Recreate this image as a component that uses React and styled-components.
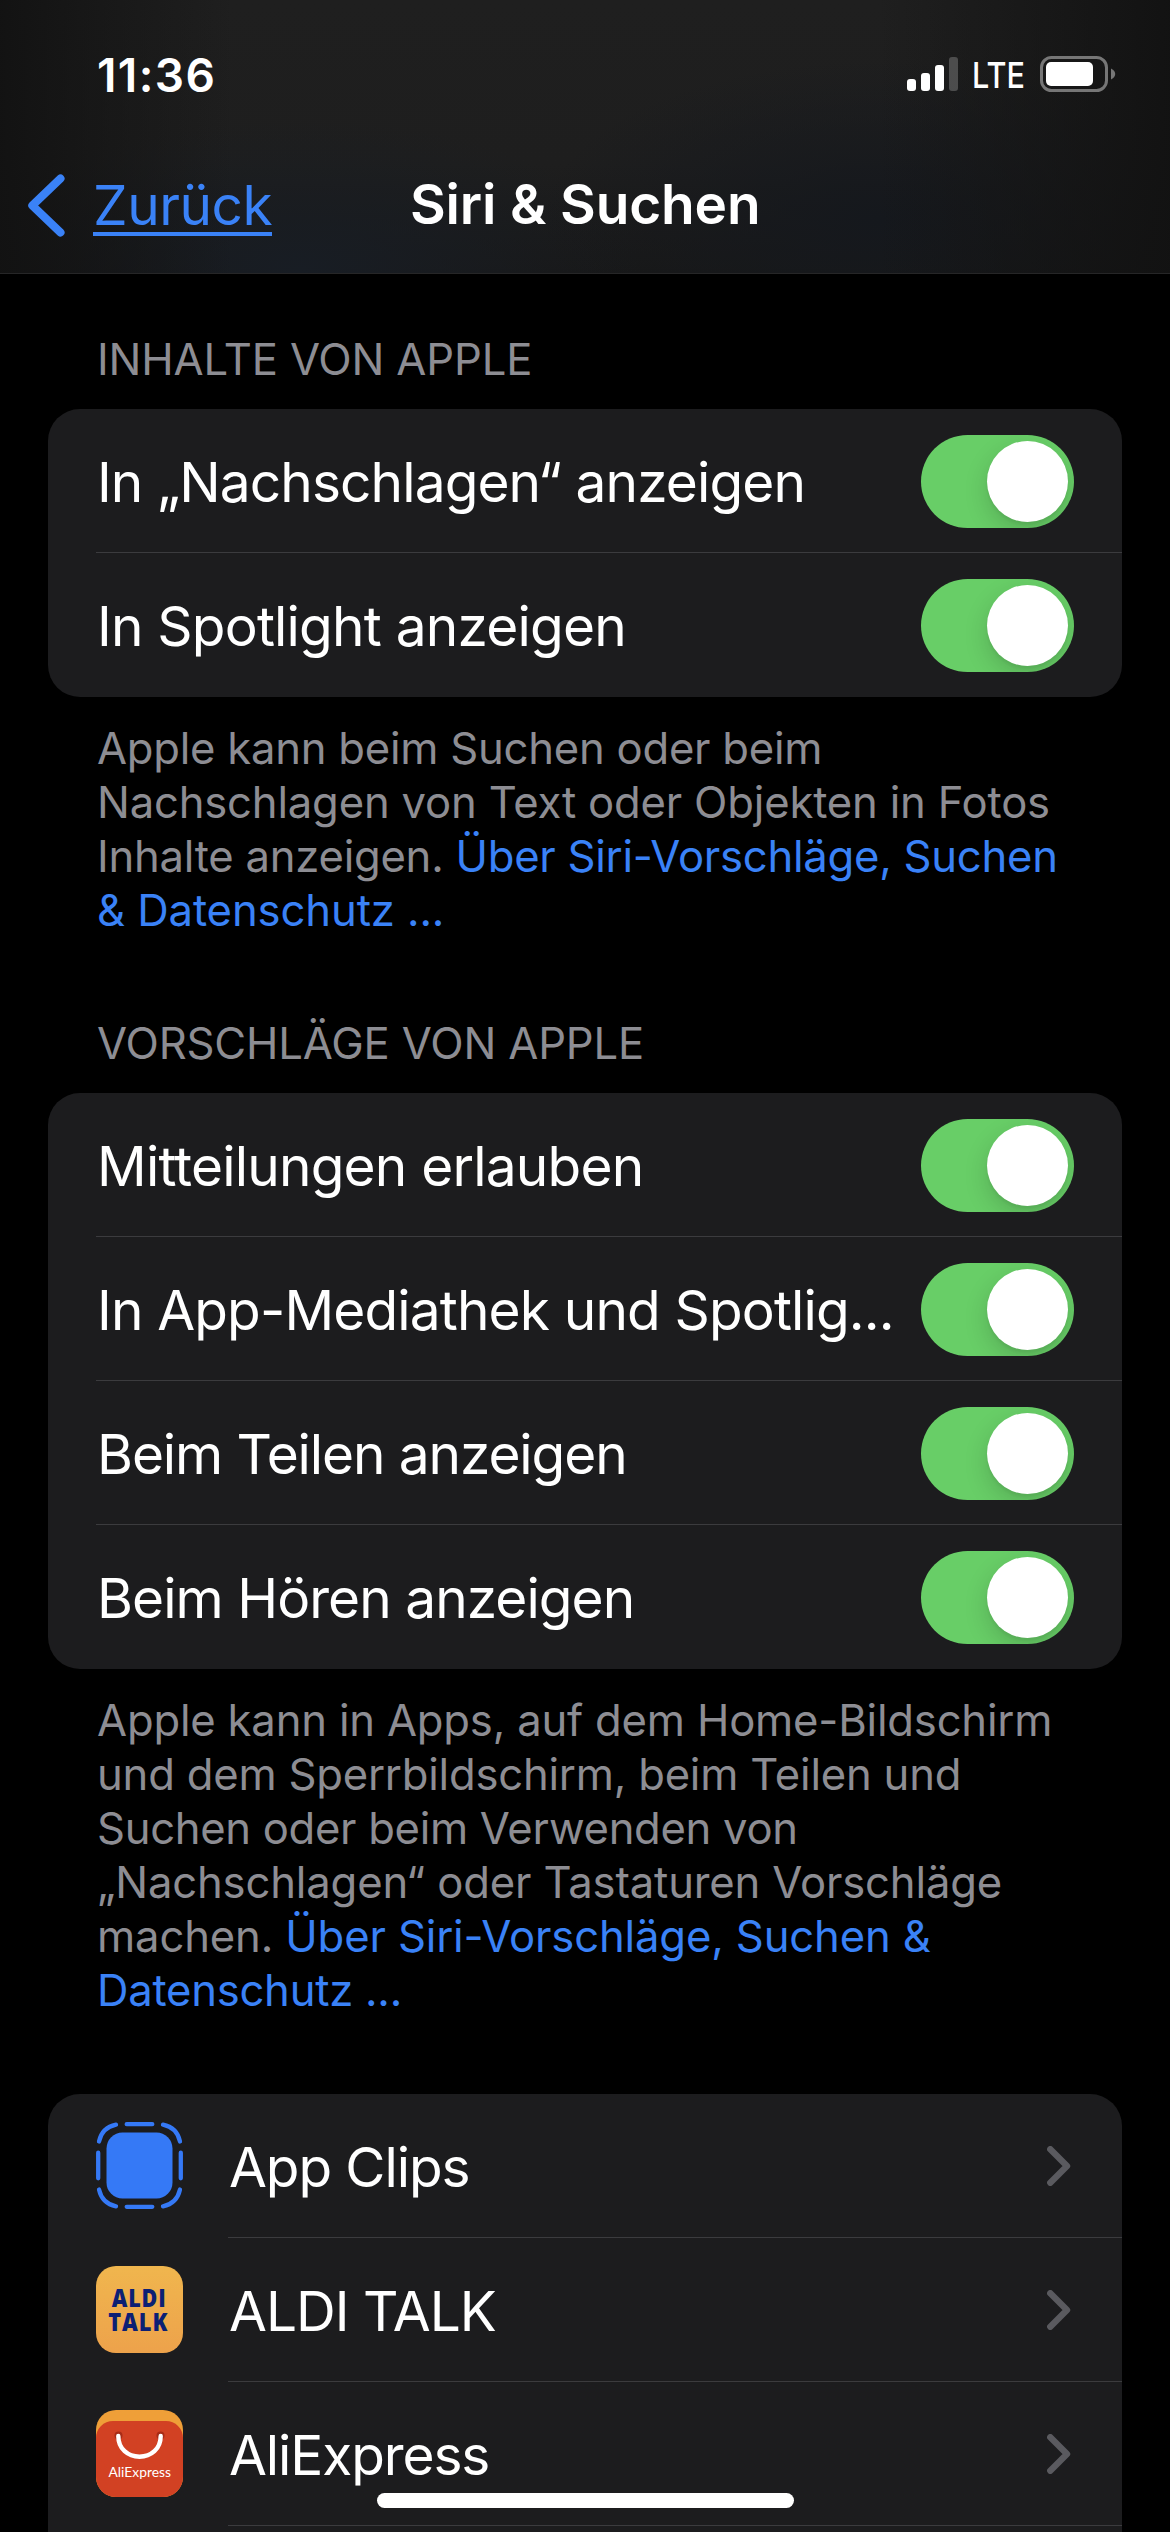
import React from 'react';
import styled, { createGlobalStyle } from 'styled-components';

const GlobalStyle = createGlobalStyle`
    * {
        box-sizing: border-box;
    }

    body {
        margin: 0;
        background: #000;
        font-family: Inter, 'Liberation Sans', sans-serif;
        color: #fff;
    }
`;

const Screen = styled.div`
    width: 1170px;
    height: 2532px;
    overflow: hidden;
    position: relative;
    display: flex;
    flex-direction: column;
`;

const Header = styled.header`
    flex: none;
    height: 274px;
    border-bottom: 1px solid #262627;
    background:
        linear-gradient(90deg, rgba(18, 18, 18, 0.95), rgba(18, 18, 18, 0) 20%, rgba(18, 18, 18, 0) 75%, rgba(18, 18, 18, 0.95)),
        radial-gradient(ellipse 340px 150px at 300px 270px, #181d24, rgba(24, 29, 36, 0)),
        radial-gradient(ellipse 340px 160px at 880px 220px, #15181d, rgba(21, 24, 29, 0)),
        linear-gradient(#1f1f1f, #1e1e1e 60%, #181818);
`;

const StatusBar = styled.div`
    height: 148px;
    padding: 0 54px 0 97px;
    display: flex;
    align-items: center;
    justify-content: space-between;
`;

const Clock = styled.span`
    padding-top: 1px;
    font-size: 46px;
    font-weight: 600;
    letter-spacing: 1.4px;
`;

const StatusIcons = styled.div`
    display: flex;
    align-items: center;
`;

const Network = styled.span`
    width: 81px;
    padding: 2px 0 0 13px;
    font-size: 36px;
    line-height: 38px;
    font-weight: 500;

    span {
        display: inline-block;
        transform: scaleX(0.85);
        transform-origin: left;
    }
`;

const NavBar = styled.nav`
    height: 114px;
    padding-left: 28px;
    display: grid;
    grid-template-columns: 382px 1fr;
    align-items: start;
`;

const BackButton = styled.a`
    display: flex;
    color: #3a82f7;
    padding-top: 26px;
`;

const BackLabel = styled.span`
    margin-left: 28px;
    height: 62px;
    font-size: 55px;
    line-height: 62px;
    border-bottom: 4px solid #3a82f7;
    letter-spacing: -0.45px;
`;

const Title = styled.h1`
    margin: 0;
    padding-top: 23px;
    font-size: 55px;
    line-height: 66px;
    font-weight: 600;
    letter-spacing: -0.15px;
`;

const Content = styled.main`
    padding: 0 48px;
`;

const SectionLabel = styled.h2`
    margin: 0;
    height: 135px;
    padding: 0 49px 22px;
    display: flex;
    align-items: flex-end;
    font-size: 43.6px;
    line-height: 54px;
    font-weight: 400;
    letter-spacing: -0.15px;
    color: #8d8d93;
`;

const Card = styled.section`
    background: #1c1c1e;
    border-radius: ${(props) => (props.$open ? '32px 32px 0 0' : '32px')};
    overflow: hidden;
`;

const Row = styled.div`
    height: 144px;
    padding-left: 48px;
    display: flex;
`;

const RowBody = styled.div`
    flex: 1;
    min-width: 0;
    display: flex;
    justify-content: space-between;
    border-bottom: 1px solid #3b3b3e;
    padding-right: ${(props) => props.$right}px;

    ${Row}:last-child & {
        border-bottom: 0;
    }
`;

const RowLabel = styled.span`
    padding: 1px 0 0 1px;
    font-size: 55px;
    line-height: 144px;
    white-space: nowrap;
    letter-spacing: ${(props) => props.$spacing}px;
`;

const Switch = styled.span`
    flex: none;
    width: 153px;
    height: 93px;
    margin-top: 26px;
    padding: 6px;
    display: flex;
    justify-content: flex-end;
    border-radius: 47px;
    background: #68ce67;
    overflow: hidden;
`;

const Knob = styled.span`
    width: 81px;
    height: 81px;
    border-radius: 50%;
    background: #fff;
    box-shadow: 0 9px 24px rgba(0, 0, 0, 0.16), 0 3px 3px rgba(0, 0, 0, 0.05);
`;

const Note = styled.p`
    margin: 0;
    height: ${(props) => props.$height}px;
    padding: 25px 0 0 49px;
    font-size: 43.6px;
    line-height: 54px;
    color: #8d8d93;
`;

const NoteLine = styled.span`
    display: block;
    white-space: nowrap;
    letter-spacing: ${(props) => props.$spacing}px;
`;

const Link = styled.a`
    color: #3a82f7;
`;

const AppIcon = styled.svg`
    flex: none;
    width: 87px;
    height: 87px;
    margin: 28px 45px 0 0;
`;

const Chevron = styled.svg`
    width: 24px;
    height: 40px;
    margin-top: 52px;
`;

const HomeIndicator = styled.div`
    position: absolute;
    left: 377px;
    bottom: 24px;
    width: 417px;
    height: 15px;
    border-radius: 8px;
    background: #fff;
`;

const AppClipsIcon = () => (
    <AppIcon viewBox="0 0 87 87">
        <rect x="10.5" y="10.5" width="66" height="66" rx="16" fill="#3579f6" />
        <g fill="none" stroke="#3579f6" strokeWidth="4.3" strokeLinecap="round">
            <path d="M30.7 2.2h25.6M30.7 84.8h25.6M2.2 30.7v25.6M84.8 30.7v25.6" />
            <path d="M3 19.5C5 10.5 11 4.5 20 2.7M67 2.7C76 4.5 82 10.5 84 19.5M84 67.5C82 76.5 76 82.5 67 84.3M20 84.3C11 82.5 5 76.5 3 67.5" />
        </g>
    </AppIcon>
);

const AldiTalkIcon = () => (
    <AppIcon viewBox="0 0 87 87">
        <defs>
            <linearGradient id="aldi" x1="0" y1="0" x2="0" y2="1">
                <stop offset="0" stopColor="#f0b64e" />
                <stop offset="1" stopColor="#eda24b" />
            </linearGradient>
        </defs>
        <rect width="87" height="87" rx="20" fill="url(#aldi)" />
        <g
            fill="#0c2074"
            fontFamily="'Open Sans', sans-serif"
            fontSize="24"
            fontWeight="800"
            letterSpacing="1"
        >
            <text x="15.7" y="41.2" textLength="55" lengthAdjust="spacingAndGlyphs">
                ALDI
            </text>
            <text x="12.3" y="65.2" textLength="60" lengthAdjust="spacingAndGlyphs">
                TALK
            </text>
        </g>
    </AppIcon>
);

const AliExpressIcon = () => (
    <AppIcon viewBox="0 0 87 87">
        <clipPath id="ali">
            <rect width="87" height="87" rx="20" />
        </clipPath>
        <g clipPath="url(#ali)">
            <rect width="87" height="87" fill="#ef9f38" />
            <rect y="11" width="87" height="90" rx="17" fill="#d24123" />
            <circle cx="22.5" cy="25.5" r="4" fill="#a82c16" />
            <circle cx="64.5" cy="25.5" r="4" fill="#a82c16" />
            <path
                d="M22.3 26C22.3 39 32 46.700 43.5 46.700S64.7 39 64.7 26"
                fill="none"
                stroke="#fff"
                strokeWidth="4.4"
                strokeLinecap="round"
            />
            <text
                x="12.5"
                y="67"
                fill="#fff"
                fontFamily="Lato, sans-serif"
                fontSize="14"
                textLength="62.5"
                lengthAdjust="spacingAndGlyphs"
            >
                AliExpress
            </text>
        </g>
    </AppIcon>
);

const SignalIcon = () => (
    <svg width="52" height="36" viewBox="0 0 52 36">
        <g fill="#fff">
            <rect x="0" y="23" width="9" height="12" rx="3" />
            <rect x="14" y="17" width="9" height="18" rx="3" />
            <rect x="28" y="9" width="9" height="26" rx="3" />
            <rect x="42" y="1" width="9" height="34" rx="3" opacity="0.22" />
        </g>
    </svg>
);

const BatteryIcon = () => (
    <svg width="76" height="36" viewBox="0 0 76 36">
        <rect x="1.5" y="1.5" width="65" height="33" rx="10" fill="none" stroke="#767676" strokeWidth="3" />
        <rect x="6" y="6" width="47" height="24" rx="5" fill="#fff" />
        <path d="M71 12.5C74 14 75.2 16 75.2 18S74 22 71 23.5z" fill="#767676" />
    </svg>
);

const Toggle = () => (
    <Switch>
        <Knob />
    </Switch>
);

const contentRows = [
    { label: 'In „Nachschlagen“ anzeigen', spacing: -0.9 },
    { label: 'In Spotlight anzeigen', spacing: -0.8 },
];

const suggestionRows = [
    { label: 'Mitteilungen erlauben', spacing: -0.8 },
    { label: 'In App-Mediathek und Spotlig...', spacing: -0.85 },
    { label: 'Beim Teilen anzeigen', spacing: -1.1 },
    { label: 'Beim Hören anzeigen', spacing: -0.95 },
];

const apps = [
    { label: 'App Clips', spacing: -1.1, Icon: AppClipsIcon },
    { label: 'ALDI TALK', spacing: -1, Icon: AldiTalkIcon },
    { label: 'AliExpress', spacing: -1.1, Icon: AliExpressIcon },
];

const ToggleCard = ({ rows }) => (
    <Card>
        {rows.map(({ label, spacing }) => (
            <Row key={label}>
                <RowBody $right={48}>
                    <RowLabel $spacing={spacing}>{label}</RowLabel>
                    <Toggle />
                </RowBody>
            </Row>
        ))}
    </Card>
);

const App = () => (
    <Screen>
        <GlobalStyle />
        <Header>
            <StatusBar>
                <Clock>11:36</Clock>
                <StatusIcons>
                    <SignalIcon />
                    <Network>
                        <span>LTE</span>
                    </Network>
                    <BatteryIcon />
                </StatusIcons>
            </StatusBar>
            <NavBar>
                <BackButton>
                    <svg width="37" height="63" viewBox="0 0 37 63">
                        <path
                            d="M32.5 4.5L4.3 31.5L32.5 58.5"
                            fill="none"
                            stroke="#3a82f7"
                            strokeWidth="8"
                            strokeLinecap="round"
                            strokeLinejoin="round"
                        />
                    </svg>
                    <BackLabel>Zurück</BackLabel>
                </BackButton>
                <Title>Siri &amp; Suchen</Title>
            </NavBar>
        </Header>
        <Content>
            <SectionLabel>INHALTE VON APPLE</SectionLabel>
            <ToggleCard rows={contentRows} />
            <Note $height={261}>
                <NoteLine $spacing={-0.23}>Apple kann beim Suchen oder beim</NoteLine>
                <NoteLine $spacing={-0.18}>Nachschlagen von Text oder Objekten in Fotos</NoteLine>
                <NoteLine $spacing={-0.24}>
                    Inhalte anzeigen. <Link>Über Siri-Vorschläge, Suchen</Link>
                </NoteLine>
                <NoteLine $spacing={-0.1}>
                    <Link>&amp; Datenschutz ...</Link>
                </NoteLine>
            </Note>
            <SectionLabel>VORSCHLÄGE VON APPLE</SectionLabel>
            <ToggleCard rows={suggestionRows} />
            <Note $height={425}>
                <NoteLine $spacing={-0.18}>Apple kann in Apps, auf dem Home-Bildschirm</NoteLine>
                <NoteLine $spacing={-0.2}>und dem Sperrbildschirm, beim Teilen und</NoteLine>
                <NoteLine $spacing={-0.3}>Suchen oder beim Verwenden von</NoteLine>
                <NoteLine $spacing={-0.15}>„Nachschlagen“ oder Tastaturen Vorschläge</NoteLine>
                <NoteLine $spacing={-0.13}>
                    machen. <Link>Über Siri-Vorschläge, Suchen &amp;</Link>
                </NoteLine>
                <NoteLine $spacing={-0.25}>
                    <Link>Datenschutz ...</Link>
                </NoteLine>
            </Note>
            <Card $open>
                {apps.map(({ label, spacing, Icon }) => (
                    <Row key={label}>
                        <Icon />
                        <RowBody $right={51}>
                            <RowLabel $spacing={spacing}>{label}</RowLabel>
                            <Chevron viewBox="0 0 24 40">
                                <path
                                    d="M3.3 3.3L20 20L3.3 36.7"
                                    fill="none"
                                    stroke="#5a5a5f"
                                    strokeWidth="6.4"
                                    strokeLinecap="round"
                                    strokeLinejoin="round"
                                />
                            </Chevron>
                        </RowBody>
                    </Row>
                ))}
                <Row />
            </Card>
        </Content>
        <HomeIndicator />
    </Screen>
);

export default App;
